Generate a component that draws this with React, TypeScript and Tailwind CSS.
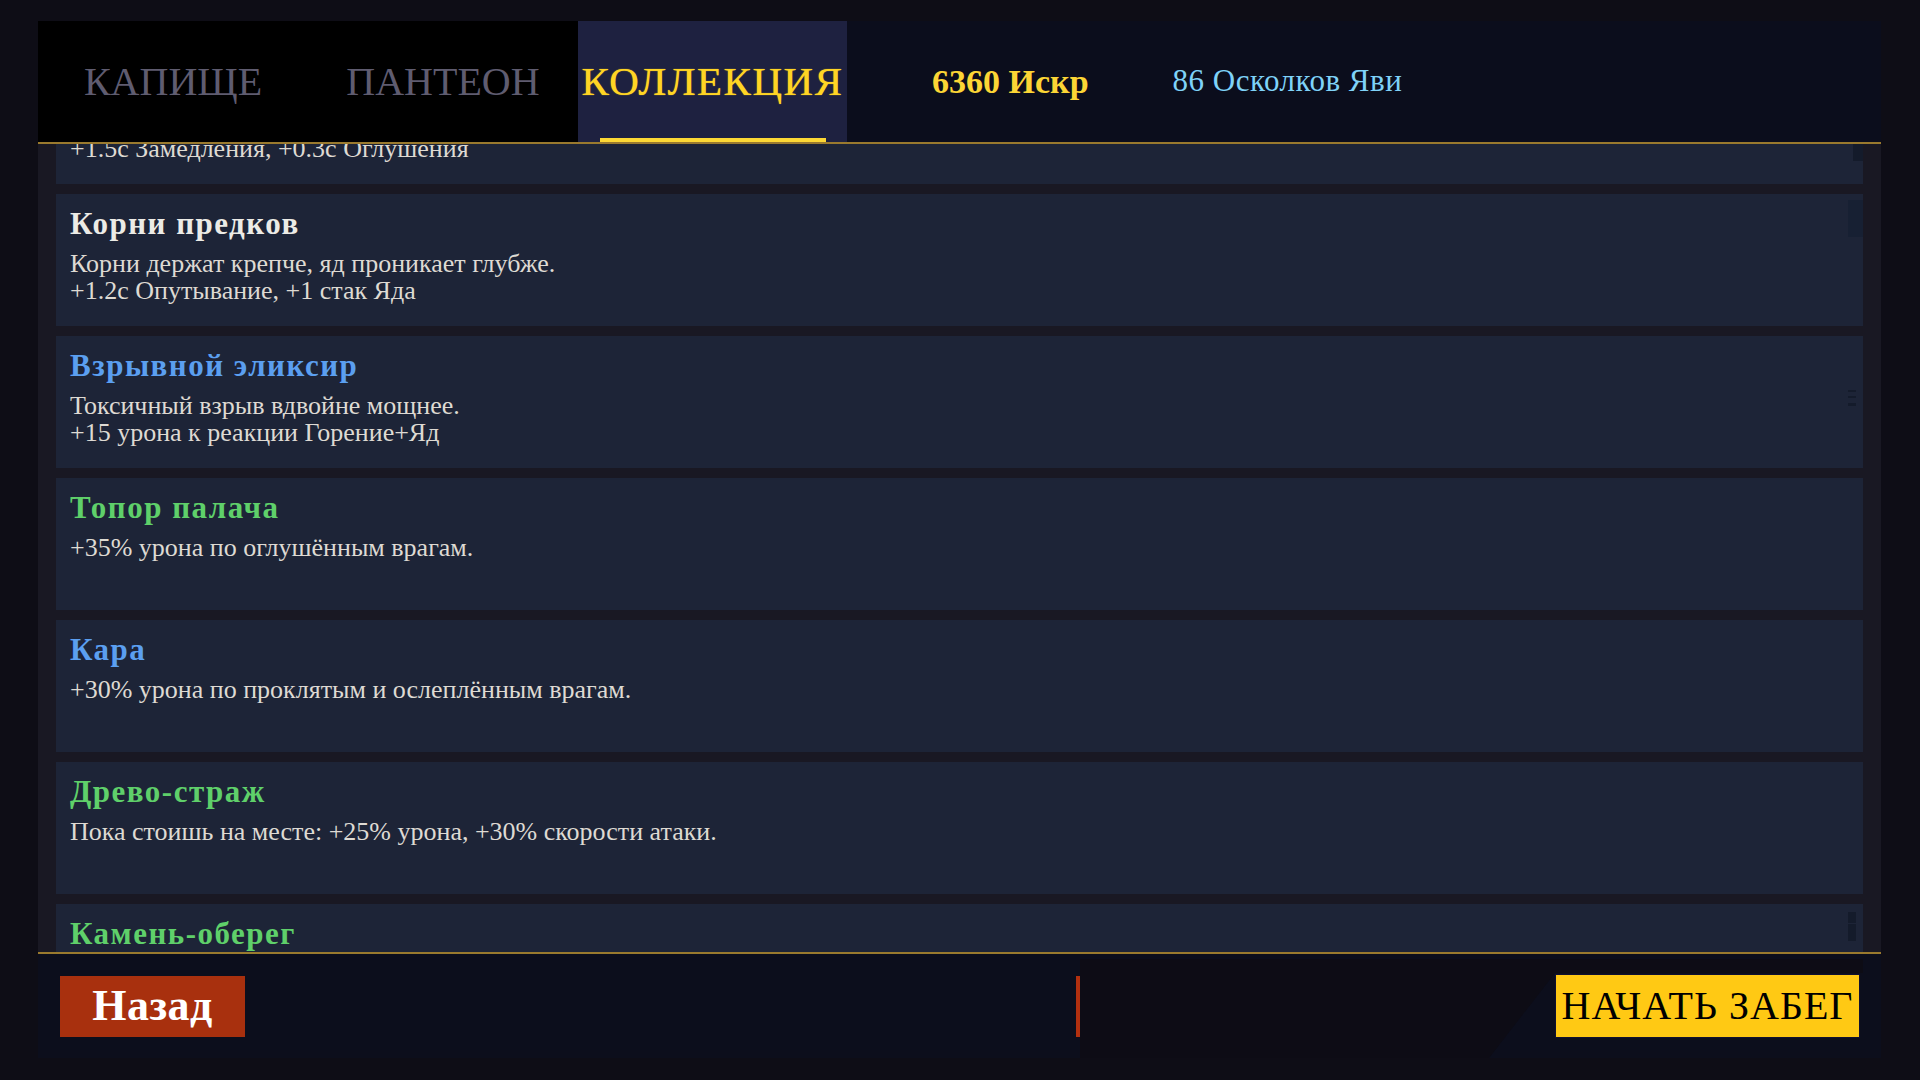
import React from "react";

type Perk = {
  title: string;
  color: string;
  lines: string[];
  mark?: "top" | "block" | "lines" | "small";
};

const perks: Perk[] = [
  { title: "Ледяные оковы", color: "text-[#ecebe6]", lines: ["Холод сковывает сильнее.", "+1.5с Замедления, +0.3с Оглушения"], mark: "top" },
  { title: "Корни предков", color: "text-[#ecebe6]", lines: ["Корни держат крепче, яд проникает глубже.", "+1.2с Опутывание, +1 стак Яда"], mark: "block" },
  { title: "Взрывной эликсир", color: "text-[#5b9ff0]", lines: ["Токсичный взрыв вдвойне мощнее.", "+15 урона к реакции Горение+Яд"], mark: "lines" },
  { title: "Топор палача", color: "text-[#5fd06a]", lines: ["+35% урона по оглушённым врагам."] },
  { title: "Кара", color: "text-[#5b9ff0]", lines: ["+30% урона по проклятым и ослеплённым врагам."] },
  { title: "Древо-страж", color: "text-[#5fd06a]", lines: ["Пока стоишь на месте: +25% урона, +30% скорости атаки."] },
  { title: "Камень-оберег", color: "text-[#5fd06a]", lines: ["Каменная кожа гасит удары.", "+20% сопротивления урону"], mark: "small" },
];

const serif = "font-['Liberation_Serif','DejaVu_Serif',serif]";

function Mark({ kind }: { kind?: Perk["mark"] }) {
  if (kind === "top")
    return <div className="absolute right-0 top-[74px] w-[10px] h-[35px] bg-[#141b2b]" />;
  if (kind === "block")
    return <div className="absolute right-0 top-[6px] w-[15px] h-[37px] bg-[#172033]" />;
  if (kind === "small")
    return (
      <div className="absolute right-[7px] top-[8px] w-[8px] flex flex-col gap-[1px]">
        <div className="h-[11px] bg-[#141b2b]" />
        <div className="h-[17px] bg-[#141b2b]" />
      </div>
    );
  if (kind === "lines")
    return (
      <div className="absolute right-[7px] top-[54px] w-[8px] flex flex-col gap-[4px]">
        <div className="h-[2px] bg-[#141b2b]" />
        <div className="h-[2px] bg-[#141b2b]" />
        <div className="h-[3px] mt-[1px] bg-[#141b2b]" />
      </div>
    );
  return null;
}

function PerkCard({ perk }: { perk: Perk }) {
  return (
    <div className="relative h-[132px] shrink-0 bg-[#1d2437] px-[14px] pt-[14px]">
      <div className={`${serif} ${perk.color} font-bold text-[31px] leading-[32px] tracking-[1.5px]`}>
        {perk.title}
      </div>
      <div className={`${serif} mt-[10px] text-[26px] leading-[27px] text-[#dedad3]`}>
        {perk.lines.map(l => (
          <div key={l}>{l}</div>
        ))}
      </div>
      <Mark kind={perk.mark} />
    </div>
  );
}

export default function App() {
  return (
    <div className="min-h-screen w-full bg-[#0e0d16] pt-[21px] pl-[38px]">
      <div className="w-[1843px] h-[1037px] flex flex-col">
        {/* Header */}
        <div className="h-[123px] shrink-0 flex border-b-2 border-[#9a7a2e] bg-[#0b0d1c]">
          <div className="flex bg-black">
            <div className={`${serif} w-[270px] flex items-center justify-center text-[40px] leading-none text-[#5f5c70]`}>КАПИЩЕ</div>
            <div className={`${serif} w-[270px] flex items-center justify-center text-[40px] leading-none text-[#5f5c70]`}>ПАНТЕОН</div>
          </div>
          <div className="relative w-[269px] flex items-center justify-center bg-[#1e2140]">
            <span className={`${serif} text-[41px] leading-none text-[#ffd524] tracking-[1.5px] whitespace-nowrap [text-shadow:0_0_1px_#ffd524]`}>КОЛЛЕКЦИЯ</span>
            <div className="absolute left-[22px] right-[21px] bottom-0 h-[4px] bg-[#fdd835]" />
          </div>
          <div className="flex items-center pl-[85px] gap-[84px]">
            <span className={`${serif} font-bold text-[34px] text-[#fcd535]`}>6360 Искр</span>
            <span className={`${serif} text-[31px] text-[#7fd2f8] tracking-[0.5px]`}>86 Осколков Яви</span>
          </div>
        </div>

        {/* List */}
        <div className="flex-1 overflow-hidden bg-[#191823] px-[18px]">
          <div className="-mt-[92px] flex flex-col gap-[10px]">
            {perks.map(p => (
              <PerkCard key={p.title} perk={p} />
            ))}
          </div>
        </div>

        <div className="h-[2px] shrink-0 bg-[#9a7a2e]" />

        {/* Footer */}
        <div className="h-[104px] shrink-0 flex bg-[#0c0e1c] pl-[22px] pr-[18px]">
          <button className={`${serif} self-center w-[185px] h-[61px] flex items-center justify-center bg-[#a8300e] text-white font-bold text-[44px] leading-none tracking-[0.5px]`}>
            Назад
          </button>
          <div className="self-center ml-[831px] w-[4px] h-[61px] bg-[#b3300f]" />
          <div className="relative flex-1 mt-[5px] flex justify-end items-start pt-[15px] pr-[3px]">
            <div className="absolute inset-0 bg-[#0d0c15] [clip-path:polygon(0_0,100%_0,100%_14px,475px_14px,409px_100%,0_100%)]" />
            <button className={`${serif} relative w-[305px] h-[64px] flex items-center justify-center bg-[#ffc914] border border-[#101030] text-black text-[40px] leading-none tracking-[1px] whitespace-nowrap`}>
              НАЧАТЬ ЗАБЕГ
            </button>
          </div>
        </div>
      </div>
    </div>
  );
}
